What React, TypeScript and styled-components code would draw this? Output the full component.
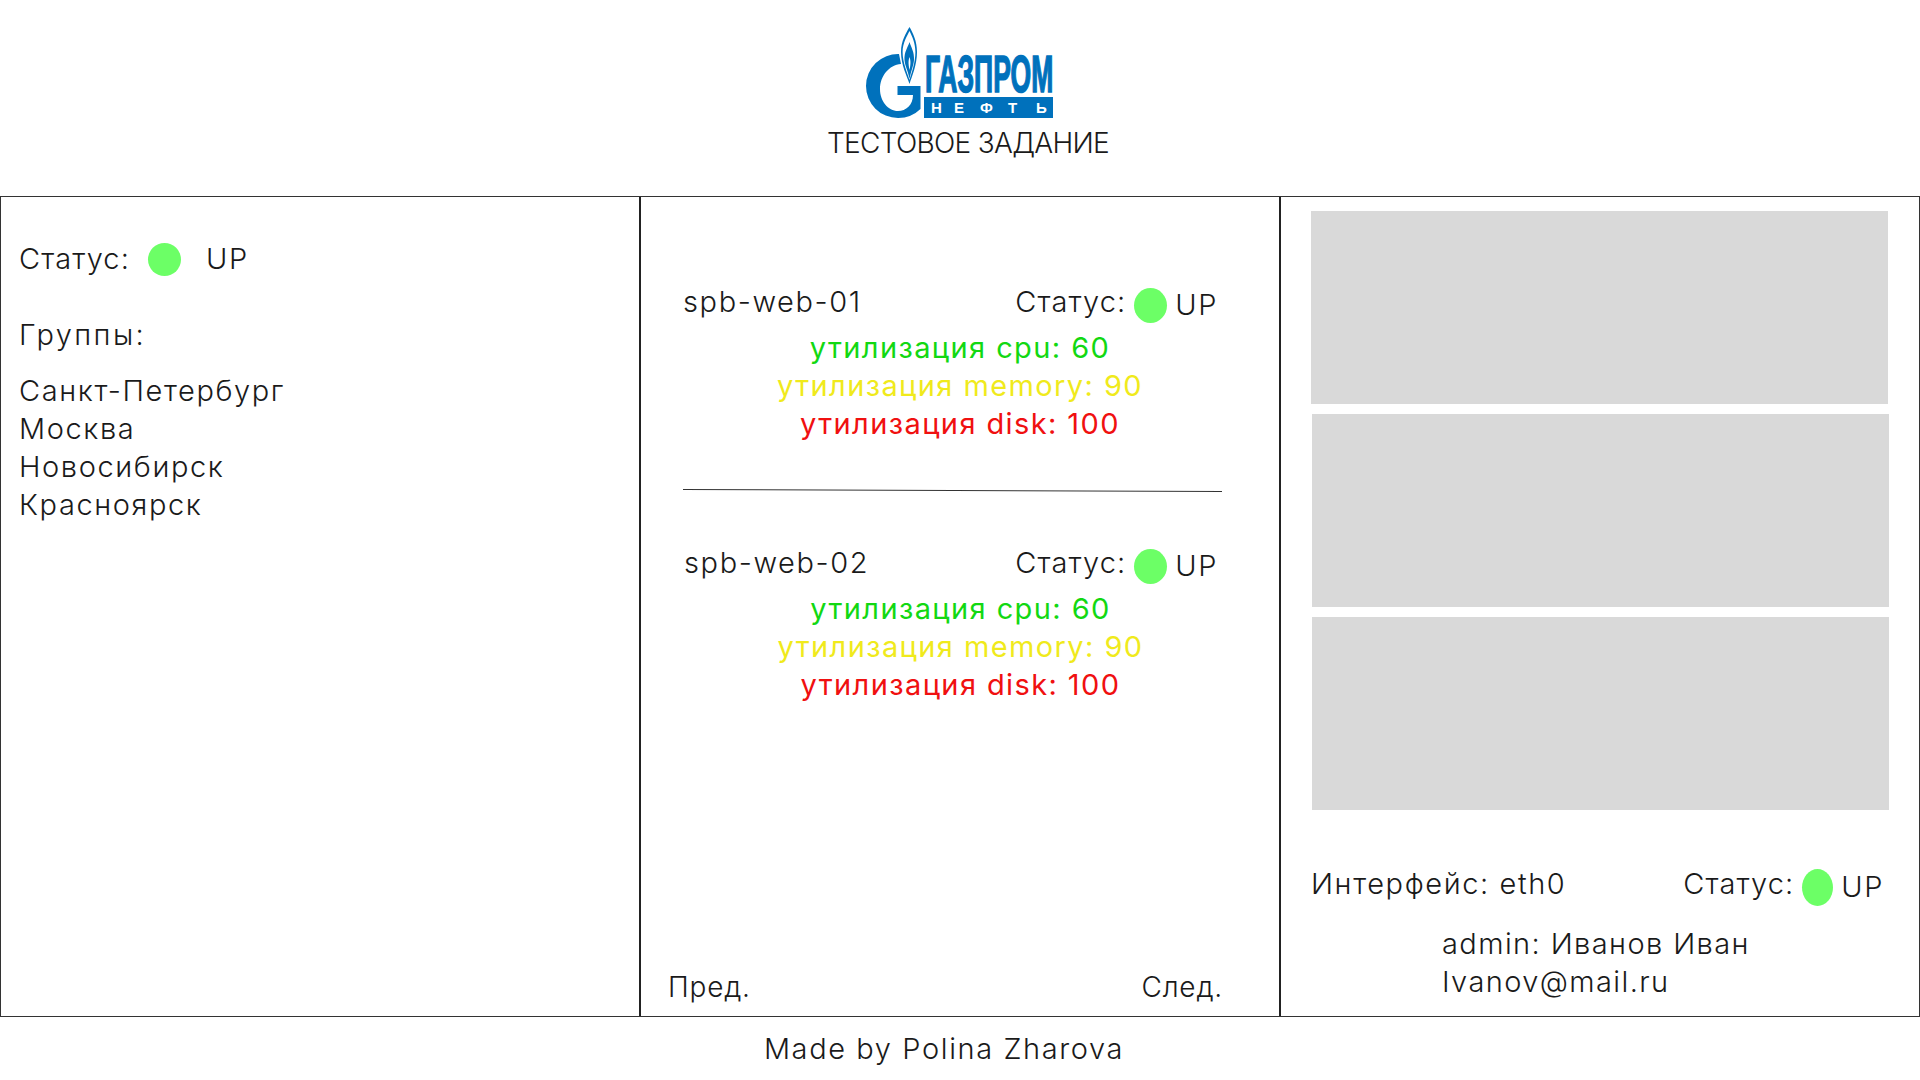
import React from 'react';
import styled, { createGlobalStyle } from 'styled-components';

const GlobalStyle = createGlobalStyle`
  body {
    margin: 0;
    background: #fff;
    color: #1a1a1a;
    font-family: "Inter", "Noto Sans", sans-serif;
    font-weight: 300;
    font-size: 29px;
    line-height: 38px;
    letter-spacing: 1.6px;
  }
`;

const Page = styled.div`
  width: 1920px;
  height: 1080px;
  display: flex;
  flex-direction: column;
  overflow: hidden;
`;

const Header = styled.header`
  height: 196px;
  display: flex;
  flex-direction: column;
  align-items: center;
  padding-top: 21px;
  box-sizing: border-box;
`;

const LogoSvg = styled.svg`
  width: 200px;
  height: 100px;
  display: block;
`;

const Title = styled.div`
  margin-top: 3px;
  margin-left: 16px;
  font-size: 28px;
  letter-spacing: -0.7px;
`;

const Panels = styled.main`
  height: 821px;
  display: grid;
  grid-template-columns: 639px 640px 641px;
  border-top: 1px solid #333;
  border-bottom: 1px solid #333;
  box-sizing: border-box;
`;

const Panel = styled.section<{ $divided?: boolean }>`
  display: flex;
  flex-direction: column;
  box-sizing: border-box;
  border-left: ${(p) => (p.$divided ? '2px solid #222' : '1px solid #333')};
  min-width: 0;
`;

const LeftPanel = styled(Panel)`
  padding: 43px 0 0 18px;
`;

const RightPanel = styled(Panel)`
  border-right: 1px solid #333;
  padding: 14px 30px 0 30px;
`;

const MiddlePanel = styled(Panel)`
  padding: 86px 56px 0 42px;
`;

const Dot = styled.span<{ $w: number; $h: number }>`
  display: inline-block;
  flex: none;
  width: ${(p) => p.$w}px;
  height: ${(p) => p.$h}px;
  border-radius: 50%;
  background: #6cff66;
`;

const LeftStatus = styled.div`
  display: flex;
  align-items: center;
  height: 38px;
  gap: 18px;
`;

const UpLabel = styled.span`
  margin-left: 7px;
`;

const GroupsTitle = styled.div`
  margin-top: 38px;
  letter-spacing: 2.4px;
`;

const CityList = styled.ul`
  list-style: none;
  margin: 18px 0 0;
  padding: 0;
`;

const ServerBlock = styled.article<{ $shift?: number }>`
  display: flex;
  flex-direction: column;
  margin-left: ${(p) => p.$shift ?? 0}px;
`;

const ServerHead = styled.div`
  display: flex;
  justify-content: space-between;
  align-items: center;
  height: 38px;
`;

const StatusGroup = styled.div`
  display: flex;
  align-items: center;
  gap: 8px;
  margin-right: 5px;
  position: relative;
  top: 3px;
`;

const StatusLabel = styled.span<{ $raised?: boolean }>`
  letter-spacing: 1.1px;
  margin-bottom: ${(p) => (p.$raised ? 6 : 0)}px;
`;

const Metric = styled.div<{ $color: string }>`
  color: ${(p) => p.$color};
  text-align: center;
  margin-left: 14px;
  font-weight: 400;
  letter-spacing: 1.4px;
`;

const Metrics = styled.div`
  margin-top: 8px;
`;

const Divider = styled.div`
  height: 1px;
  background: #333;
  margin: 47px 1px 53px 0;
  transform: rotate(0.2deg);
`;

const Pager = styled.nav`
  margin-top: auto;
  display: flex;
  justify-content: space-between;
  margin-left: -15px;
  margin-right: 0;
  padding-bottom: 10px;
  font-size: 28px;
  letter-spacing: 0.8px;
`;

const ChartBox = styled.div<{ $shift?: number }>`
  width: 577px;
  height: 193px;
  background: #d9d9d9;
  margin-bottom: 10px;
  margin-left: ${(p) => p.$shift ?? 0}px;
`;

const InterfaceRow = styled.div`
  display: flex;
  justify-content: space-between;
  align-items: center;
  margin-top: 45px;
  height: 38px;
`;

const AdminBlock = styled.div`
  margin: 22px 0 0 131px;
  letter-spacing: 1.4px;
`;

const Footer = styled.footer`
  text-align: center;
  margin-top: 13px;
  margin-left: -32px;
`;

const Logo = () => (
  <LogoSvg viewBox="0 0 200 100">
    <path
      fill="#0071bc"
      d="M39 33 A32 32 0 0 0 6 65 A32 32 0 0 0 38 97 A32 32 0 0 0 60.5 88 L60.5 65 H37.5 V74 H53 C53 84 46 90 38 90 C28 90 20 80 20 68 C20 55 29 44 41 43 Z"
    />
    <path fill="#0071bc" d="M49.5 6 C53 12 57 20 57 31 C57 44 52 55 49.5 63 C47 55 41 44 41 31 C41 20 46 12 49.5 6 Z" />
    <path fill="#fff" d="M49.5 10 C52 15 55.4 22 55.4 31 C55.4 42 51.5 52 49.5 59 C47.5 52 42.6 42 42.6 31 C42.6 22 47 15 49.5 10 Z" />
    <path fill="#0071bc" d="M49.5 21 C51 26 54.5 31 54 39 C53.5 45 51 50 49.5 58 C48 50 45 45 44.5 39 C44 31 48 26 49.5 21 Z" />
    <path fill="#fff" d="M49.5 36 C50.5 39 51 42 49.5 49 C48 42 48.5 39 49.5 36 Z" />
    <text
      transform="translate(65 71) scale(0.51 1)"
      fill="#0071bc"
      stroke="#0071bc"
      strokeWidth="1.6"
      fontFamily="'Liberation Sans', sans-serif"
      fontWeight="700"
      fontSize="52"
      letterSpacing="0"
    >
      ГАЗПРОМ
    </text>
    <rect x="64" y="76" width="129" height="21" fill="#0071bc" />
    <text
      x="71 94 120 148 176"
      y="92"
      fill="#fff"
      fontFamily="'Liberation Sans', sans-serif"
      fontWeight="700"
      fontSize="15"
      letterSpacing="0"
    >
      НЕФТЬ
    </text>
  </LogoSvg>
);

const Status = ({ w, h }: { w: number; h: number }) => (
  <StatusGroup>
    <StatusLabel $raised>Статус:</StatusLabel>
    <Dot $w={w} $h={h} />
    <span>UP</span>
  </StatusGroup>
);

const Server = ({ name, shift }: { name: string; shift?: number }) => (
  <ServerBlock $shift={shift}>
    <ServerHead>
      <span>{name}</span>
      <Status w={33} h={35} />
    </ServerHead>
    <Metrics>
      <Metric $color="#12d812">утилизация cpu: 60</Metric>
      <Metric $color="#f0ea1c">утилизация memory: 90</Metric>
      <Metric $color="#f01010">утилизация disk: 100</Metric>
    </Metrics>
  </ServerBlock>
);

const CITIES = ['Санкт-Петербург', 'Москва', 'Новосибирск', 'Красноярск'];

function App() {
  return (
    <Page>
      <GlobalStyle />
      <Header>
        <Logo />
        <Title>ТЕСТОВОЕ ЗАДАНИЕ</Title>
      </Header>
      <Panels>
        <LeftPanel>
          <LeftStatus>
            <StatusLabel>Статус:</StatusLabel>
            <Dot $w={33} $h={33} />
            <UpLabel>UP</UpLabel>
          </LeftStatus>
          <GroupsTitle>Группы:</GroupsTitle>
          <CityList>
            {CITIES.map((city) => (
              <li key={city}>{city}</li>
            ))}
          </CityList>
        </LeftPanel>
        <MiddlePanel $divided>
          <Server name="spb-web-01" />
          <Divider />
          <Server name="spb-web-02" shift={1} />
          <Pager>
            <span>Пред.</span>
            <span>След.</span>
          </Pager>
        </MiddlePanel>
        <RightPanel $divided>
          <ChartBox />
          <ChartBox $shift={1} />
          <ChartBox $shift={1} />
          <InterfaceRow>
            <span>Интерфейс: eth0</span>
            <Status w={31} h={37} />
          </InterfaceRow>
          <AdminBlock>
            <div>admin: Иванов Иван</div>
            <div>Ivanov@mail.ru</div>
          </AdminBlock>
        </RightPanel>
      </Panels>
      <Footer>Made by Polina Zharova</Footer>
    </Page>
  );
}

export default App;
